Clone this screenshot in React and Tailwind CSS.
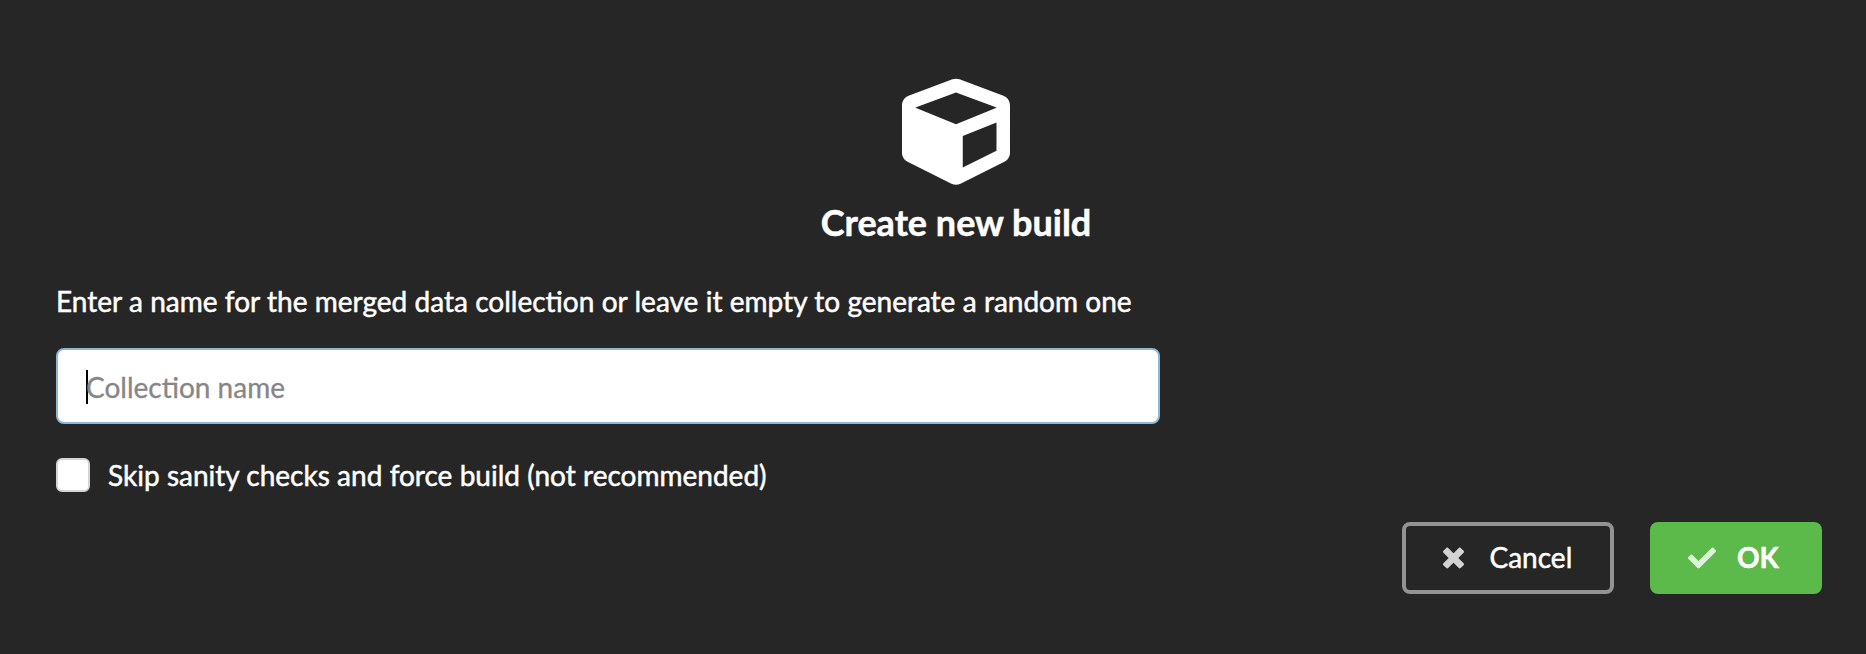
import { FaCube, FaCheck } from "react-icons/fa";

function TimesIcon({ className }) {
  return (
    <svg viewBox="0 0 384 512" fill="currentColor" className={className}>
      <path d="M323.1 441l53.9-53.9c9.4-9.4 9.4-24.5 0-33.9L279.8 256l97.2-97.2c9.4-9.4 9.4-24.5 0-33.9L323.1 71c-9.4-9.4-24.5-9.4-33.9 0L192 168.2 94.8 71c-9.4-9.4-24.5-9.4-33.9 0L7 124.9c-9.4 9.4-9.4 24.5 0 33.9l97.2 97.2L7 353.2c-9.4 9.4-9.4 24.5 0 33.9L60.9 441c9.4 9.4 24.5 9.4 33.9 0l97.2-97.2 97.2 97.2c9.3 9.3 24.5 9.3 33.9 0z" />
    </svg>
  );
}

export default function App() {
  return (
    <div className="flex h-[654px] w-full flex-col bg-[#262626] font-['Lato',sans-serif] text-[28px] leading-[40px] text-white [-webkit-text-stroke:0.5px]">
      <header className="flex flex-col items-center pt-[78px] pl-[46px]">
        <FaCube className="size-[108px]" />
        <h1 className="mt-[13px] text-[36px] leading-[46px] font-bold">Create new build</h1>
      </header>
      <main className="flex flex-col items-start pl-[56px]">
        <label htmlFor="name" className="mt-[36px] [word-spacing:0.16px]">
          Enter a name for the merged data collection or leave it empty to generate a random one
        </label>
        <div className="mt-[27px] flex h-[76px] w-[1104px] items-center rounded-[8px] border-2 border-[#8fb6d5] bg-white pl-[28px]">
          <span className="mt-[2px] h-[34px] w-[2px] bg-black" />
          <input
            id="name"
            placeholder="Collection name"
            className="-ml-[2px] flex-1 bg-transparent pt-[2px] text-black outline-none [-webkit-text-stroke:0.3px_#868686] placeholder:text-[#868686]"
          />
        </div>
        <label className="mt-[34px] flex h-[34px] items-center gap-[18px]">
          <span className="size-[34px] rounded-[6px] border-2 border-[#d4d4d5] bg-white" />
          <span className="[word-spacing:0.12px]">Skip sanity checks and force build (not recommended)</span>
        </label>
      </main>
      <footer className="mt-[30px] flex justify-end gap-[36px] pr-[44px]">
        <button className="flex h-[72px] w-[212px] items-center rounded-[8px] border-4 border-[#939393] pl-[37px]">
          <TimesIcon className="h-[28px] w-[21px] opacity-80 [-webkit-text-stroke:0px]" />
          <span className="ml-[25.5px] pb-[2px]">Cancel</span>
        </button>
        <button className="flex h-[72px] w-[172px] items-center rounded-[8px] bg-[#5bba4a] pl-[38px] font-bold">
          <FaCheck className="size-[28px] opacity-80" />
          <span className="ml-[21px] pb-[2px]">OK</span>
        </button>
      </footer>
    </div>
  );
}
